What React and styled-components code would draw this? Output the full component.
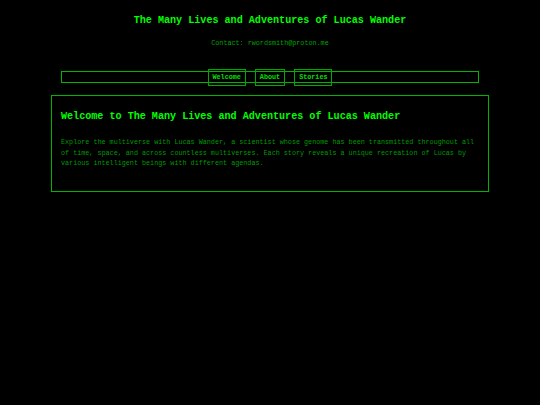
import React from 'react';
import styled, { createGlobalStyle } from 'styled-components';

const GlobalStyle = createGlobalStyle`
  html, body {
    margin: 0;
    padding: 0;
    background: #000;
    color: #00ff00;
    font-family: "Liberation Mono", "Courier New", monospace;
  }
`;

const Page = styled.div`
  width: 540px;
  min-height: 405px;
  background: #000;
`;

const Header = styled.header`
  text-align: center;
  padding-top: 14px;
`;

const Title = styled.h1`
  margin: 0;
  font-size: 10.1px;
  line-height: 14px;
  font-weight: bold;
  color: #00ff00;
`;

const Contact = styled.p`
  margin: 11px 0 0;
  font-size: 6.75px;
  line-height: 9px;
  color: #00a300;
`;

const Nav = styled.nav`
  margin: 23px 61px 0;
  height: 10px;
  border: 1.8px solid #00b400;
  display: flex;
  justify-content: center;
  align-items: center;
  gap: 9px;
`;

const NavButton = styled.a`
  display: flex;
  align-items: center;
  height: 17px;
  padding: 0 4px;
  border: 1px solid #00a800;
  font-size: 6.75px;
  font-weight: bold;
  color: #00e000;
  text-decoration: none;
  box-sizing: border-box;
`;

const Section = styled.section`
  margin: 12px 51px 0;
  border: 1.8px solid #00b400;
  padding: 14px 9px 24px;
  height: 97px;
  box-sizing: border-box;
`;

const Heading = styled.h2`
  margin: 0;
  font-size: 10.1px;
  line-height: 14px;
  font-weight: bold;
  color: #00ff00;
`;

const Body = styled.p`
  margin: 13px 0 0;
  font-size: 6.75px;
  line-height: 10.6px;
  color: #009a00;
`;

const links = ['Welcome', 'About', 'Stories'];

export default function App() {
  return (
    <Page>
      <GlobalStyle />
      <Header>
        <Title>The Many Lives and Adventures of Lucas Wander</Title>
        <Contact>Contact: rwordsmith@proton.me</Contact>
      </Header>
      <Nav>
        {links.map((l) => (
          <NavButton key={l} href="#">{l}</NavButton>
        ))}
      </Nav>
      <Section>
        <Heading>Welcome to The Many Lives and Adventures of Lucas Wander</Heading>
        <Body>
          Explore the multiverse with Lucas Wander, a scientist whose genome has been transmitted throughout all
          of time, space, and across countless multiverses. Each story reveals a unique recreation of Lucas by
          various intelligent beings with different agendas.
        </Body>
      </Section>
    </Page>
  );
}
